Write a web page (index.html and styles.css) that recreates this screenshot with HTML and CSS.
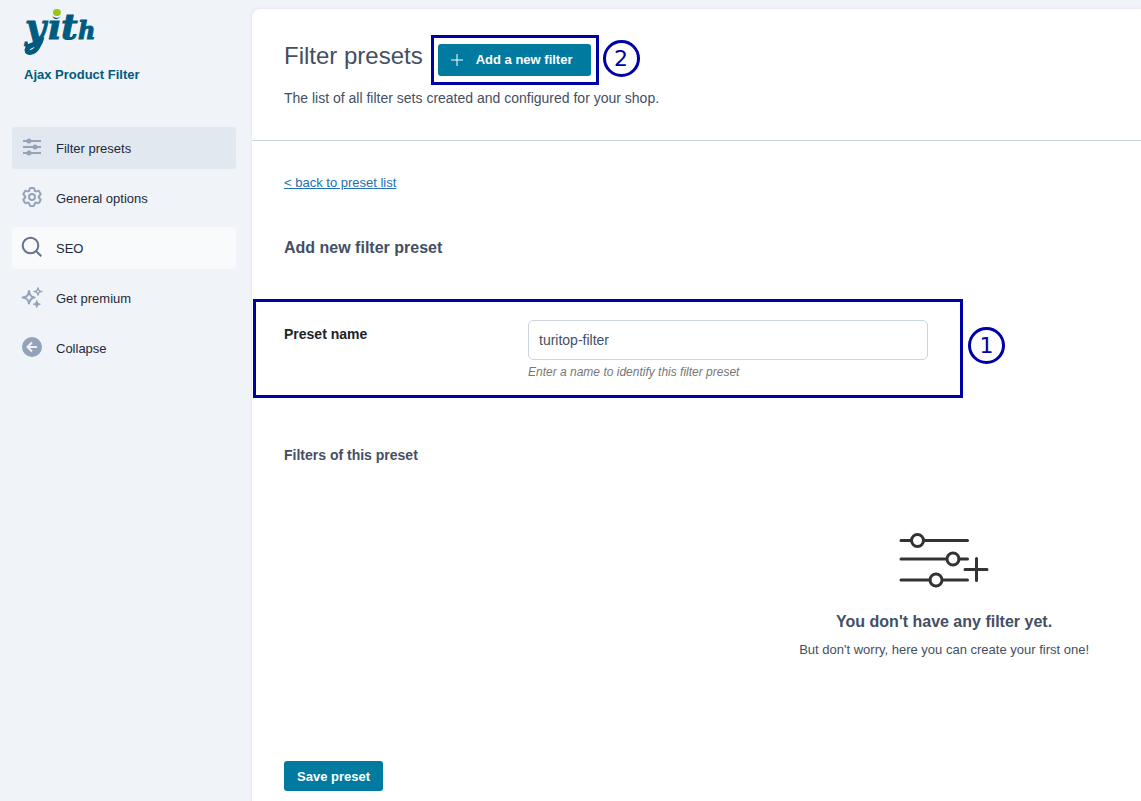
FILE: index.html
```html
<!DOCTYPE html>
<html lang="en">
<head>
<meta charset="utf-8">
<title>Ajax Product Filter</title>
<link rel="stylesheet" href="styles.css">
</head>
<body>
<div class="app">
  <aside class="sidebar">
    <div class="brand">
      <svg class="logo" width="72" height="48" viewBox="0 0 72 48" role="img" aria-label="yith">
        <text class="logo-text" y="31"><tspan x="1">y</tspan><tspan x="24">i</tspan><tspan x="37">t</tspan><tspan class="logo-small" x="54">h</tspan></text>
        <path class="logo-swash" d="M17 32C13 37 3 37 3 42C3 46 10 45 13 40C15 37 17 34 18 29"/>
        <ellipse class="logo-cover" cx="33" cy="5" rx="5.500" ry="5"/>
        <ellipse class="logo-dot" cx="33" cy="4.500" rx="4" ry="3.500" transform="rotate(-12 33 5)"/>
      </svg>
      <div class="product">Ajax Product Filter</div>
    </div>
    <nav class="menu">
      <a class="item current" href="#presets">
        <svg class="icon" viewBox="0 0 20 20"><path d="M1 4h18M1 10h18M1 16h18"/><g class="solid"><circle cx="7" cy="4" r="1.500"/><circle cx="13" cy="10" r="1.500"/><circle cx="7" cy="16" r="1.500"/></g></svg>
        <span>Filter presets</span>
      </a>
      <a class="item" href="#general">
        <svg class="icon" viewBox="2 2 20 20"><path d="M9.594 3.94c.09-.542.56-.94 1.11-.94h2.593c.55 0 1.02.398 1.11.94l.213 1.281c.063.374.313.686.645.87.074.04.147.083.22.127.325.196.72.257 1.075.124l1.217-.456a1.125 1.125 0 0 1 1.37.49l1.296 2.247a1.125 1.125 0 0 1-.26 1.431l-1.003.827c-.293.241-.438.613-.43.992a7.723 7.723 0 0 1 0 .255c-.008.378.137.75.43.991l1.004.827c.424.35.534.955.26 1.43l-1.298 2.247a1.125 1.125 0 0 1-1.369.491l-1.217-.456c-.355-.133-.75-.072-1.076.124a6.47 6.47 0 0 1-.22.128c-.331.183-.581.495-.644.869l-.213 1.281c-.09.543-.56.94-1.11.94h-2.594c-.55 0-1.019-.398-1.11-.94l-.213-1.281c-.062-.374-.312-.686-.644-.87a6.52 6.52 0 0 1-.22-.127c-.325-.196-.72-.257-1.076-.124l-1.217.456a1.125 1.125 0 0 1-1.369-.49l-1.297-2.247a1.125 1.125 0 0 1 .26-1.431l1.004-.827c.292-.24.437-.613.43-.991a6.932 6.932 0 0 1 0-.255c.007-.38-.138-.751-.43-.992l-1.004-.827a1.125 1.125 0 0 1-.26-1.43l1.297-2.247a1.125 1.125 0 0 1 1.37-.491l1.216.456c.356.133.751.072 1.076-.124.072-.044.146-.086.22-.128.332-.183.582-.495.644-.869l.214-1.28Z"/><circle cx="12" cy="12" r="3"/></svg>
        <span>General options</span>
      </a>
      <a class="item hovered" href="#seo">
        <svg class="icon" viewBox="0 0 20 20"><circle cx="8.500" cy="8.500" r="7.800"/><path d="M14.300 14.300l5 5"/></svg>
        <span>SEO</span>
      </a>
      <a class="item" href="#premium">
        <svg class="icon" viewBox="0 0 20 20"><path d="M7 4C7.600 8.500 9 9.900 12.500 10.500C9 11.100 7.600 12.500 7 16.500C6.400 12.500 5 11.100 .500 10.500C5 9.900 6.400 8.500 7 4Z"/><path class="solid small-star" d="M16 0.500C16.500 3 17.500 4 20.300 4.500C17.500 5 16.500 6 16 8.500C15.500 6 14.500 5 11.700 4.500C14.500 4 15.500 3 16 .500ZM14.800 13.500C15.200 15.800 16 16.700 18.300 17.200C16 17.700 15.200 18.500 14.800 20.500C14.400 18.500 13.500 17.700 11.300 17.200C13.500 16.700 14.400 15.800 14.800 13.500Z"/><circle class="star-core" cx="16" cy="4.500" r="1"/></svg>
        <span>Get premium</span>
      </a>
      <a class="item" href="#collapse">
        <svg class="icon" viewBox="0 0 20 20"><circle class="solid" cx="10" cy="10" r="9"/><path class="arrow" d="M15 10H6M10 5.500L5.500 10L10 14.500"/></svg>
        <span>Collapse</span>
      </a>
    </nav>
  </aside>

  <main class="panel">
    <header class="panel-header">
      <div class="title-row">
        <h1>Filter presets</h1>
        <div class="add-wrap">
          <button class="button add" type="button">
            <svg width="14" height="14" viewBox="0 0 14 14"><path d="M7 1v12M1 7h12"/></svg>
            Add a new filter
          </button>
          <span class="highlight"></span>
          <span class="marker">2</span>
        </div>
      </div>
      <p class="description">The list of all filter sets created and configured for your shop.</p>
    </header>

    <form class="content">
      <a class="back" href="#list">&lt; back to preset list</a>
      <h2>Add new filter preset</h2>
      <div class="field">
        <label for="preset-name">Preset name</label>
        <div class="control">
          <input id="preset-name" type="text" value="turitop-filter">
          <p class="hint">Enter a name to identify this filter preset</p>
        </div>
        <span class="highlight"></span>
        <span class="marker">1</span>
      </div>
      <h3>Filters of this preset</h3>
      <div class="empty">
        <svg width="90" height="56" viewBox="0 0 90 56"><path d="M2 8.500h10.500M25.500 8.500h43M2 27h45M60 27h8.500M2 48h29M44 48h24.500M66 37.500h22M77.500 26.500v22"/><circle cx="18.500" cy="8.500" r="6"/><circle cx="54" cy="27" r="6"/><circle cx="37" cy="48" r="6"/></svg>
        <p class="empty-title">You don't have any filter yet.</p>
        <p class="empty-text">But don't worry, here you can create your first one!</p>
      </div>
      <button class="button save" type="button">Save preset</button>
    </form>
  </main>
</div>
</body>
</html>
```
FILE: styles.css
```css
* { box-sizing: border-box; }

body {
  margin: 0;
  background: #f0f3f8;
  color: #434f63;
  font-family: "Liberation Sans", Arial, sans-serif;
  font-size: 13px;
  line-height: 20px;
}

h1, h2, h3, p { margin: 0; }

.app {
  display: flex;
  min-height: 100vh;
}

.sidebar {
  flex: none;
  width: 252px;
  padding: 8px 16px 0 12px;
}

.brand { padding: 0 12px; }
.logo { display: block; overflow: visible; }
.logo-text {
  fill: #005b80;
  stroke: #005b80;
  stroke-width: 1;
  font-family: "DejaVu Serif", serif;
  font-size: 36px;
  font-weight: bold;
  font-style: italic;
}
.logo-small { font-size: 24px; }
.logo-swash {
  fill: none;
  stroke: #005b80;
  stroke-width: 5;
}
.logo-cover { fill: #f0f3f8; }
.logo-dot { fill: #9bc516; }

.product {
  margin-top: 9px;
  color: #005b80;
  font-weight: bold;
}

.menu {
  display: flex;
  flex-direction: column;
  gap: 8px;
  margin-top: 42px;
}

.item {
  display: flex;
  align-items: center;
  gap: 14px;
  height: 42px;
  padding: 0 10px;
  border-radius: 4px;
  color: #1e293b;
  text-decoration: none;
}
.item span { padding-top: 2px; }
.current { background: #e1e8f0; }
.hovered { background: #f8fafc; }

.icon {
  width: 20px;
  height: 20px;
  margin-bottom: 2px;
  overflow: visible;
  fill: none;
  stroke: #94a3b8;
  stroke-width: 2;
  stroke-linejoin: round;
}
.hovered .icon { stroke: #64748b; }
.icon .solid { fill: #94a3b8; }
.icon .small-star { stroke-width: 1; }
.icon .star-core { fill: #f0f3f8; stroke: none; }
.icon .arrow { stroke: #f0f3f8; }

.panel {
  flex: 1;
  min-width: 0;
  margin-top: 9px;
  border-top-left-radius: 8px;
  background: #fff;
  box-shadow: 0 0 3px #d8dfe8;
}

.panel-header {
  padding: 32px;
  border-bottom: 1px solid #cbd5e1;
}

.title-row {
  display: flex;
  align-items: flex-start;
  gap: 15px;
}

h1 {
  font-size: 24px;
  font-weight: normal;
  line-height: 30px;
}

.add-wrap { position: relative; margin-top: 3px; }

.button {
  display: flex;
  align-items: center;
  border: 0;
  border-radius: 3px;
  background: #007a9f;
  color: #fff;
  font: bold 13px "Liberation Sans", Arial, sans-serif;
}
.add {
  gap: 12px;
  height: 32px;
  padding: 0 18px 1px 12px;
}
.add svg { fill: none; stroke: #fff; }

.highlight {
  position: absolute;
  inset: -9px -8px -9px -7px;
  border: 3px solid #0000a8;
  pointer-events: none;
}

.marker {
  position: absolute;
  top: -4px;
  left: calc(100% + 12px);
  width: 37px;
  height: 37px;
  border: 3px solid #0000a8;
  border-radius: 50%;
  color: #0000a8;
  font-family: "DejaVu Sans", sans-serif;
  font-size: 22px;
  line-height: 31px;
  text-align: center;
}

.description { margin-top: 12px; font-size: 14px; }

.content {
  display: flex;
  flex-direction: column;
  align-items: flex-start;
  padding: 32px 32px 10px;
}

.back { color: #2271b1; }

h2 {
  margin-top: 45px;
  font-size: 16px;
  line-height: 20px;
}

.field {
  position: relative;
  display: flex;
  align-items: flex-start;
  max-width: 644px;
  width: 100%;
  margin-top: 62px;
}
.field label {
  width: 244px;
  padding-top: 4px;
  color: #1d2327;
  font-size: 14px;
  font-weight: bold;
}
.control { flex: 1; }
.control input {
  display: block;
  width: 100%;
  height: 40px;
  padding: 0 10px;
  border: 1px solid #cbd5e1;
  border-radius: 5px;
  background: #fff;
  color: #434f63;
  font: 14px "Liberation Sans", Arial, sans-serif;
}
.hint {
  margin-top: 2px;
  color: #777;
  font-size: 12px;
  font-style: italic;
}
.field .highlight { inset: -21px -35px -16px -31px; }
.field .marker { top: 7px; left: calc(100% + 40px); }

h3 {
  margin-top: 63px;
  font-size: 14px;
}

.empty {
  display: flex;
  flex-direction: column;
  align-items: center;
  align-self: flex-end;
  margin: 67px 20px 0 0;
}
.empty svg {
  fill: none;
  stroke: #333;
  stroke-width: 3;
  stroke-linecap: round;
}
.empty-title {
  margin-top: 24px;
  font-size: 16px;
  font-weight: bold;
}
.empty-text { margin-top: 8px; }

.save {
  height: 30px;
  margin-top: 101px;
  padding: 0 13px;
}
```
